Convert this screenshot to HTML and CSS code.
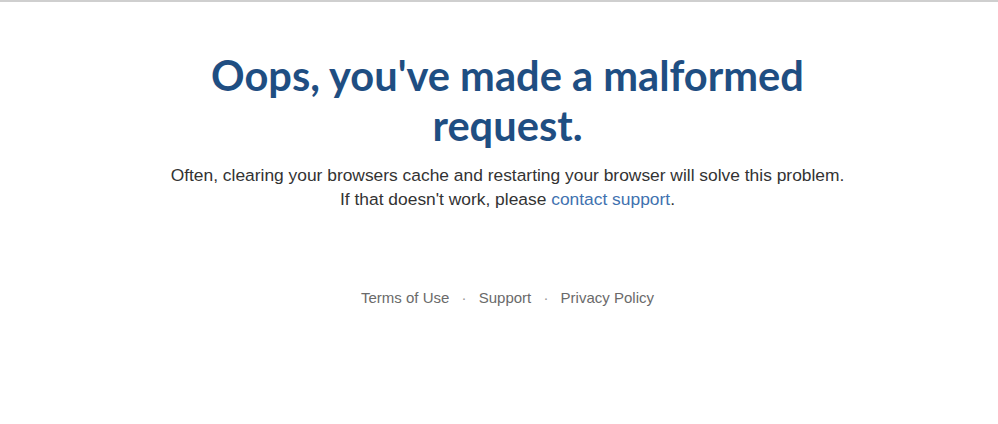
FILE: index.html
```html
<!DOCTYPE html>
<html lang="en">
<head>
    <meta charset="UTF-8">
    <meta name="viewport" content="width=device-width, initial-scale=1.0">
    <title>Malformed request</title>
    <link rel="stylesheet" href="styles.css">
</head>
<body>

<div class="error-page">
    <h1 class="title">Oops, you've made a malformed request.</h1>
    <p class="message">
        Often, clearing your browsers cache and restarting your browser will solve this problem.<br>
        If that doesn't work, please <a href="#">contact support</a>.
    </p>
</div>

<div class="footer">
    <a href="#">Terms of Use</a>
    <span class="dot">&middot;</span>
    <a href="#">Support</a>
    <span class="dot">&middot;</span>
    <a href="#">Privacy Policy</a>
</div>

</body>
</html>
```

FILE: styles.css
```css
body {
    font-family: "Liberation Sans", Arial, sans-serif;
    margin: 0;
    padding-left: 17px;
    background-color: #fff;
    border-top: 2px solid #cfcfcf;
    color: #333;
}
.error-page {
    text-align: center;
    padding-top: 48px;
}
.title {
    font-family: Lato, "Open Sans", sans-serif;
    font-weight: 700;
    font-size: 41.6px;
    line-height: 50px;
    color: #1f4e82;
    max-width: 640px;
    margin: 0 auto;
}
.message {
    font-size: 17.4px;
    line-height: 24px;
    margin: 13px 0 0;
}
.message a {
    color: #3f72b0;
    text-decoration: none;
}
.footer {
    text-align: center;
    margin-top: 78px;
    font-size: 15px;
    color: #777;
}
.footer a {
    color: #6a6a6a;
    text-decoration: none;
}
.footer .dot {
    margin: 0 8px;
    color: #999;
}
```
